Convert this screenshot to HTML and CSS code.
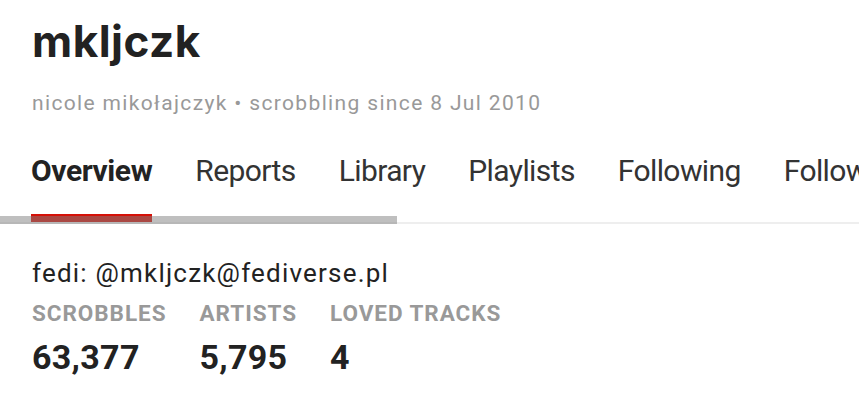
FILE: index.html
```html
<!DOCTYPE html>
<html lang="en">
<head>
<meta charset="utf-8">
<title>mkljczk</title>
<link rel="stylesheet" href="styles.css">
</head>
<body>
<div class="page">
  <header class="header">
    <h1 class="username">mkljczk</h1>
    <p class="meta">nicole mikołajczyk • scrobbling since 8 Jul 2010</p>
  </header>
  <nav class="tabs-wrap">
    <ul class="tabs">
      <li class="tab active">Overview</li>
      <li class="tab">Reports</li>
      <li class="tab">Library</li>
      <li class="tab">Playlists</li>
      <li class="tab">Following</li>
      <li class="tab">Followers</li>
    </ul>
    <div class="scrollbar"></div>
  </nav>
  <section class="about">
    <p class="bio">fedi: @mkljczk@fediverse.pl</p>
    <ul class="stats">
      <li class="stat"><span class="stat-label">Scrobbles</span><span class="stat-value">63,377</span></li>
      <li class="stat"><span class="stat-label">Artists</span><span class="stat-value">5,795</span></li>
      <li class="stat"><span class="stat-label">Loved Tracks</span><span class="stat-value">4</span></li>
    </ul>
  </section>
</div>
</body>
</html>
```

FILE: styles.css
```css
* { box-sizing: border-box; }
html, body { margin: 0; padding: 0; background: #fff; }
body {
  font-family: Roboto, "Noto Sans", sans-serif;
  color: #222;
  overflow: hidden;
  width: 859px;
  height: 401px;
}
.page { display: flex; flex-direction: column; }
.header { padding: 14px 0 0 32px; }
.username {
  margin: 0;
  font-family: Inter, Roboto, sans-serif;
  font-weight: 700;
  font-size: 44px;
  line-height: 54px;
  letter-spacing: 0.5px;
  color: #222;
}
.meta {
  margin: 23px 0 0;
  font-size: 21px;
  line-height: 24px;
  color: #999;
  letter-spacing: 1.35px;
}
.tabs-wrap {
  position: relative;
  margin-top: 38px;
  overflow: hidden;
}
.tabs {
  list-style: none;
  margin: 0;
  padding: 0 0 0 31px;
  display: flex;
  gap: 43px;
  white-space: nowrap;
  border-bottom: 2px solid #eee;
}
.tab {
  font-size: 30px;
  line-height: 36px;
  padding-bottom: 25px;
  border-bottom: 8px solid transparent;
  color: #333;
  letter-spacing: -0.6px;
}
.tab.active {
  font-weight: 700;
  color: #222;
  border-bottom-color: #d51007;
  letter-spacing: -0.4px;
}
.scrollbar {
  position: absolute;
  left: 0;
  bottom: 0;
  width: 397px;
  height: 8px;
  background: rgba(128, 128, 128, 0.5);
}
.about { padding: 34px 0 0 32px; }
.bio {
  margin: 0;
  font-size: 26px;
  line-height: 30px;
  color: #222;
  letter-spacing: 1.2px;
}
.stats {
  list-style: none;
  margin: 12px 0 0;
  padding: 0;
  display: flex;
  gap: 33px;
}
.stat { display: flex; flex-direction: column; }
.stat-label {
  font-size: 22.5px;
  line-height: 26px;
  font-weight: 700;
  text-transform: uppercase;
  color: #999;
  letter-spacing: 0.95px;
}
.stat-value {
  margin-top: 11px;
  font-size: 34px;
  line-height: 40px;
  font-weight: 700;
  color: #222;
  letter-spacing: 0.3px;
}
```
